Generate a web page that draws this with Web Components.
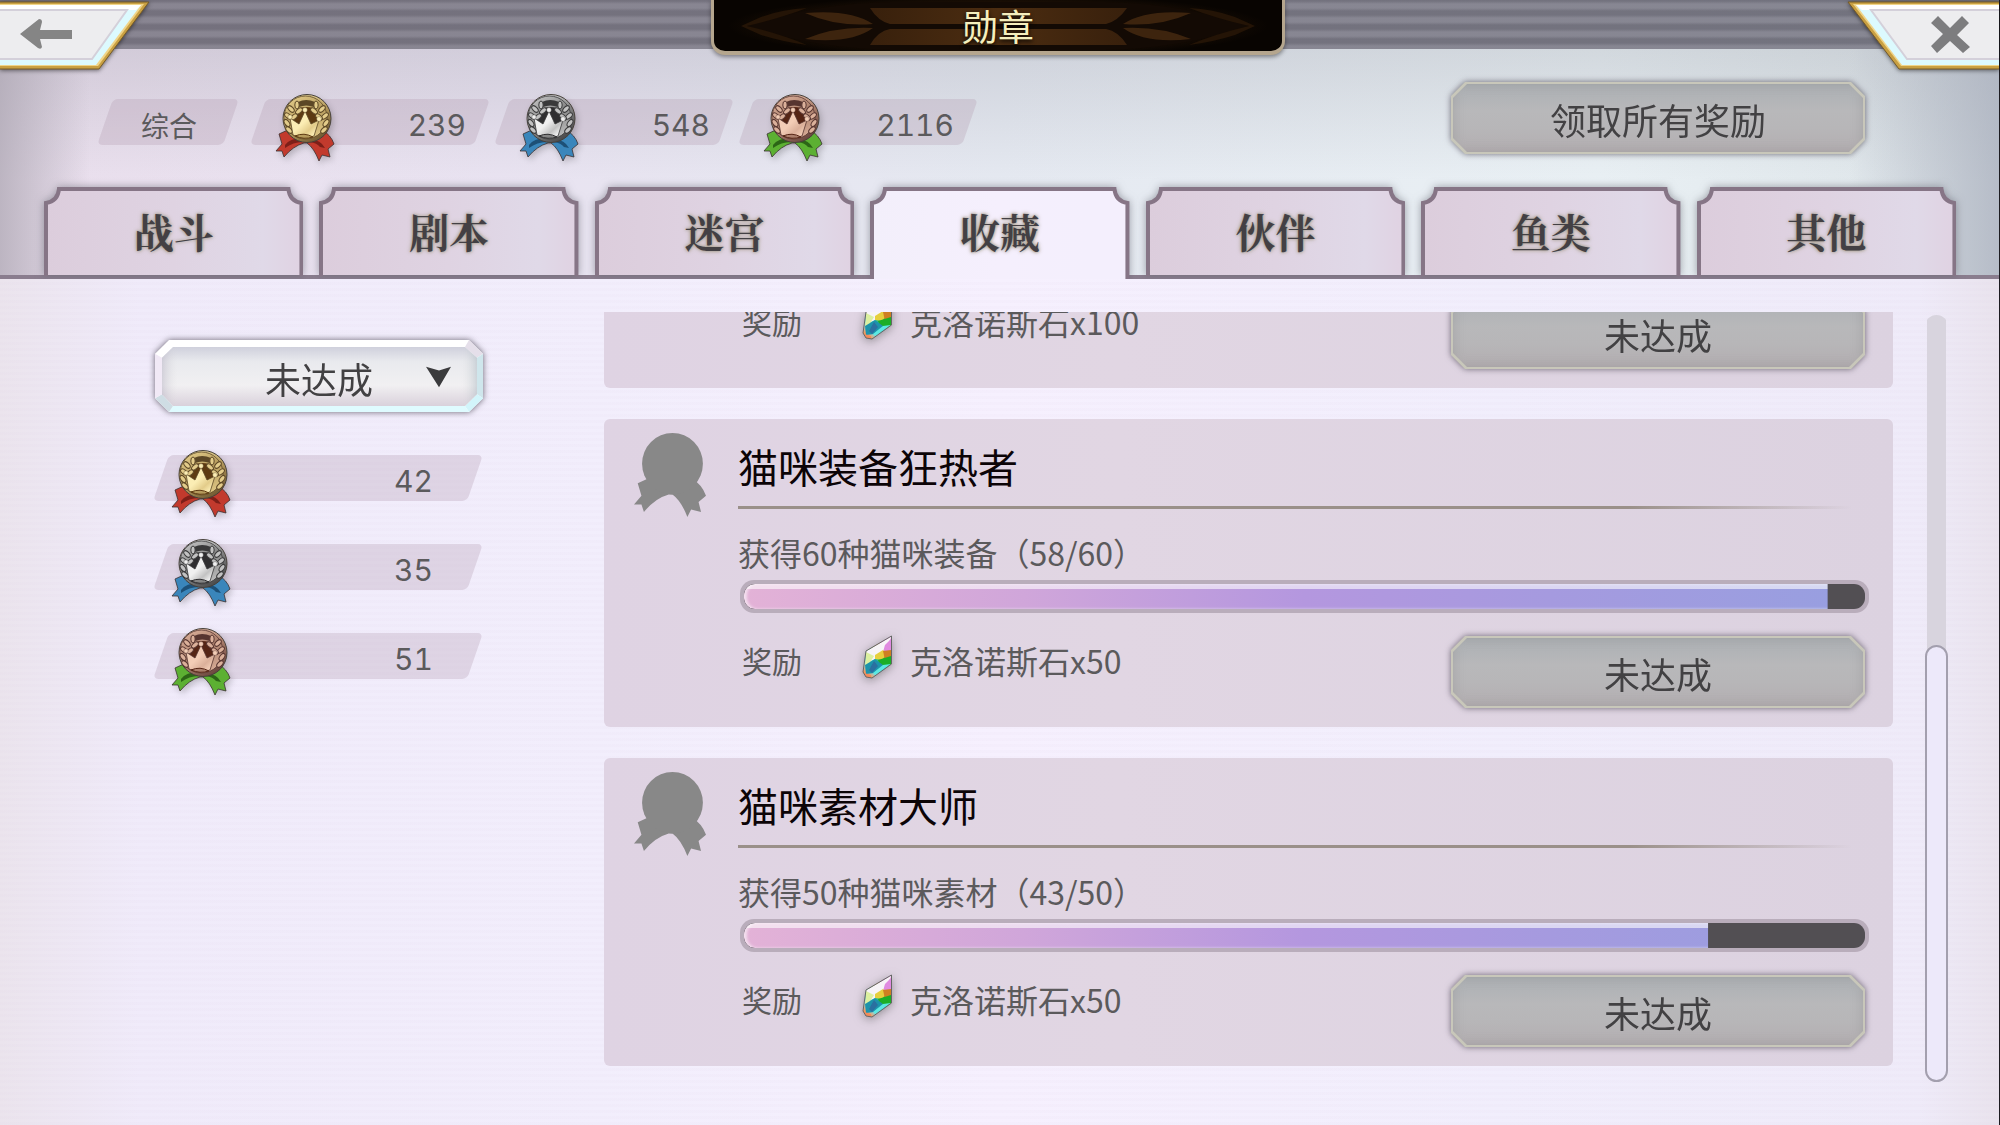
<!DOCTYPE html>
<html lang="zh-CN">
<head>
<meta charset="utf-8">
<title>勋章</title>
<style>
	body {
		margin: 0;
		font-family: "Noto Sans CJK SC", "Noto Sans", sans-serif;
		color: #5b5a5c;
	}
</style>
</head>
<body>
<medal-screen></medal-screen>

<script>
const MEDALS = {
	gold: {light: '#fbedb4', leaf: '#e3cc8a', mid: '#b59a5c', dark: '#5c4726', deep: '#5d3a12', ribbon: '#c23a2d', fold: '#7d1f18'},
	silver: {light: '#f0f0f0', leaf: '#c2c2c2', mid: '#858585', dark: '#39393a', deep: '#2f2e30', ribbon: '#3a86bb', fold: '#1d5077'},
	bronze: {light: '#f3cdb6', leaf: '#dbb09a', mid: '#ab7f6c', dark: '#573530', deep: '#562515', ribbon: '#5cb032', fold: '#2c6516'},
}

const TABS = ['战斗', '剧本', '迷宫', '收藏', '伙伴', '鱼类', '其他']
const TOTALS = [['gold', 239], ['silver', 548], ['bronze', 2116]]
const REMAINING = [['gold', 42], ['silver', 35], ['bronze', 51]]

const RIBBON = 'M3 40 L14 35 L46 36 Q55 41 58 50 L52 55 L54 63 L46 61 L43 67 Q38 54 31 49 H28 Q17 52 8 63 L6 57 L0 57 L6 50 Z'

class MedalIcon extends HTMLElement {
	constructor() {
		super()
		this.attachShadow({mode:'open'})
	}

	connectedCallback() {
		let c = MEDALS[this.getAttribute('kind')]
		this.shadowRoot.innerHTML = /*html*/`
<style>
	:host {
		display: block;
		width: 58px;
		height: 67px;
	}
	svg {
		display: block;
		width: 100%;
		height: 100%;
		overflow: visible;
	}
	.cast {
		filter: drop-shadow(2px 3px 3px #0003);
	}
</style>
${c ? this.coloured(c) : this.locked()}`
	}

	locked() {
		return /*html*/`
<svg viewBox="0 0 58 67" preserveAspectRatio="none" aria-hidden="true">
	<path d="${RIBBON}" fill="#888"/>
	<circle cx="31" cy="24.500" r="24.500" fill="#888"/>
</svg>`
	}

	coloured(c) {
		// leaves of one laurel branch: x, y, rotation
		let leaves = [[21,11,0], [15,15,-45], [23,17,50], [12,22,-50], [18,23,50], [11,29,-35], [13,36,-45]]
		let branch = leaves
			.map(([x, y, r]) => `<ellipse cx="${x}" cy="${y}" rx="2.200" ry="4" transform="rotate(${r} ${x} ${y})"/>`)
			.join('')
		return /*html*/`
<svg viewBox="0 0 58 67" aria-hidden="true">
	<defs>
		<linearGradient id="rim" x1="0.2" y1="0" x2="0.9" y2="1">
			<stop offset="0" stop-color="${c.light}"/>
			<stop offset="0.5" stop-color="${c.mid}"/>
			<stop offset="1" stop-color="${c.dark}"/>
		</linearGradient>
		<linearGradient id="face" x1="0.2" y1="0" x2="0.8" y2="1">
			<stop offset="0" stop-color="${c.leaf}"/>
			<stop offset="0.5" stop-color="${c.mid}"/>
			<stop offset="1" stop-color="${c.leaf}"/>
		</linearGradient>
		<linearGradient id="crown" x1="0" y1="0" x2="1" y2="1">
			<stop offset="0.45" stop-color="${c.light}"/>
			<stop offset="0.68" stop-color="${c.leaf}"/>
			<stop offset="0.85" stop-color="${c.light}"/>
		</linearGradient>
	</defs>
	<g class="cast">
		<path d="${RIBBON}" fill="${c.ribbon}" stroke="#3a3030" stroke-width="0.8"/>
		<path d="M9 51 Q14 44 27 44 L27 48 Q17 48 9 54 Z M34 45 Q45 46 49 54 L44 53 Q41 49 34 48 Z" fill="${c.fold}"/>
		<circle cx="31" cy="24.500" r="24" fill="url(#rim)" stroke="#46403a"/>
		<circle cx="29.500" cy="23.500" r="21.500" fill="url(#face)" stroke="${c.dark}" stroke-width="0.800"/>
	</g>
	<path d="M22 8 Q30 4 39 8 L38 13 Q30 10 23 13 Z" fill="${c.dark}"/>
	<path d="M24 14 Q30 12 37 14 L43 27 L36 33 L20 33 L17 27 Z" fill="${c.deep}"/>
	<g fill="${c.leaf}" stroke="${c.dark}" stroke-width="1">
		<g>${branch}</g>
		<g transform="translate(61 0) scale(-1 1)">${branch}</g>
	</g>
	<path d="M14 24 L23 30 L29 17 L35 30 L43 26 L38 42 Q28 46 17 41 Z" fill="url(#crown)" stroke="${c.dark}" stroke-width="0.800"/>
	<path d="M19 42 Q28 38 37 43 Q28 46 19 42 Z" fill="${c.mid}" stroke="${c.deep}"/>
	<g fill="${c.light}" stroke="${c.dark}" stroke-width="0.400">
		<circle cx="14" cy="23" r="2.200"/><circle cx="29" cy="16" r="2.400"/><circle cx="43" cy="25" r="2.400"/>
	</g>
</svg>`
	}
}
customElements.define('medal-icon', MedalIcon)


class MedalCount extends HTMLElement {
	constructor() {
		super()
		this.attachShadow({mode:'open'})
	}

	connectedCallback() {
		let kind = this.getAttribute('kind')
		this.shadowRoot.innerHTML = /*html*/`
<style>
	:host {
		display: flex;
		position: relative;
		isolation: isolate;
		box-sizing: border-box;
		height: 46px;
		width: 240px;
		align-items: center;
		justify-content: flex-end;
		padding: 0 24px;
		font: 30px/46px Inter, "Noto Sans CJK SC", sans-serif;
		font-variant-numeric: tabular-nums;
	}
	:host([wide]) {
		width: auto;
		padding: 0 50px;
	}
	:host([plain]) {
		width: 142px;
		justify-content: center;
		font-size: 28px;
	}
	:host::before {
		content: "";
		position: absolute;
		z-index: -1;
		inset: 0 8px;
		border-radius: 5px;
		transform: skewX(-19deg);
		background: #b39bb04d;
	}
	medal-icon {
		position: absolute;
		left: 26px;
		top: -5px;
	}
	:host([wide]) medal-icon {
		left: 19px;
	}
	span {
		padding-top: 6px;
	}
	:host([plain]) span {
		padding: 10px 0 0 2px;
	}
</style>
${kind ? `<medal-icon kind="${kind}"></medal-icon>` : ''}
<span><slot></slot></span>`
	}
}
customElements.define('medal-count', MedalCount)


class CutButton extends HTMLElement {
	constructor() {
		super()
		this.attachShadow({mode:'open'})
		this.shadowRoot.innerHTML = /*html*/`
<style>
	:host {
		display: block;
		width: 414px;
		height: 72px;
		filter: drop-shadow(0 0 3px #3c3644b0);
	}
	button {
		position: relative;
		isolation: isolate;
		width: 100%;
		height: 100%;
		border: 0;
		padding: 2px 0 0;
		background: none;
		font: inherit;
		font-size: 36px;
		line-height: 52px;
		color: #424143;
	}
	button::before, button::after {
		content: "";
		position: absolute;
		z-index: -1;
		inset: 0;
		clip-path: polygon(14px 0, calc(100% - 14px) 0, 100% 14px, 100% calc(100% - 14px), calc(100% - 14px) 100%, 14px 100%, 0 calc(100% - 14px), 0 14px);
		background: #c8c7ba;
	}
	button::after {
		inset: 2px;
		background: linear-gradient(#acb0b4, #b8b8ba 40%, #b7b6b8 65%, #b3aeb1);
		box-shadow: inset 0 0 12px #8886;
	}
</style>
<button type="button" disabled><slot></slot></button>`
	}
}
customElements.define('cut-button', CutButton)


class MedalFilter extends HTMLElement {
	constructor() {
		super()
		this.attachShadow({mode:'open', delegatesFocus:true})
		this.shadowRoot.innerHTML = /*html*/`
<style>
	:host {
		display: grid;
		height: 72px;
		margin: 0 0 0 2px;
		filter: drop-shadow(0 0 3px #3c3644c0);
	}
	svg, select {
		grid-area: 1 / 1;
		width: 100%;
		height: 100%;
		min-width: 0;
	}
	select {
		position: relative;
		appearance: none;
		border: 0;
		margin: 0;
		padding: 3px 0 0;
		background: none;
		font: inherit;
		font-size: 36px;
		color: #424143;
		text-align: center;
		text-align-last: center;
	}
</style>
<svg viewBox="0 0 328 73" preserveAspectRatio="none" aria-hidden="true">
	<defs>
		<linearGradient id="face" x2="0" y2="1">
			<stop offset="0" stop-color="#cfd0dc"/>
			<stop offset="0.25" stop-color="#e9eaee"/>
			<stop offset="0.65" stop-color="#f1f0f2"/>
			<stop offset="1" stop-color="#d9d1db"/>
		</linearGradient>
		<linearGradient id="side">
			<stop offset="0" stop-color="#aaa5b8" stop-opacity="0.4"/>
			<stop offset="0.05" stop-color="#ddd" stop-opacity="0"/>
			<stop offset="0.95" stop-color="#ddd" stop-opacity="0"/>
			<stop offset="1" stop-color="#9aabb5" stop-opacity="0.4"/>
		</linearGradient>
	</defs>
	<path d="M14 0 H314 L328 14 V59 L314 73 H14 L0 59 V14 Z" fill="#fff"/>
	<path d="M314 0 L328 14 L322 18 L310 7 Z" fill="#e5dfea"/>
	<path d="M328 14 V59 L322 55 V18 Z" fill="#cfe6ec"/>
	<path d="M328 59 L314 73 L310 67 L322 55 Z" fill="#d2f5fb"/>
	<path d="M314 73 H14 L18 67 H310 Z" fill="#dffbff"/>
	<path d="M14 73 L0 59 L7 55 L18 67 Z" fill="#cfdde4"/>
	<path d="M0 59 V14 L7 18 V55 Z" fill="#f1e9f6"/>
	<path d="M18 7 H310 L322 18 V55 L310 67 H18 L7 55 V18 Z" fill="url(#face)"/>
	<path d="M18 7 H310 L322 18 V55 L310 67 H18 L7 55 V18 Z" fill="url(#side)"/>
	<path d="M271 27 L284 31 L296 27 L284 48 Z" fill="#3b3b3d"/>
</svg>
<select aria-label="达成状态">
	<option>未达成</option>
</select>`
	}
}
customElements.define('medal-filter', MedalFilter)


class MedalTab extends HTMLElement {
	constructor() {
		super()
		this.attachShadow({mode:'open', delegatesFocus:true})
	}

	connectedCallback() {
		let active = this.hasAttribute('active')
		this.shadowRoot.innerHTML = /*html*/`
<style>
	:host {
		display: block;
		flex: 1;
		height: 92px;
	}
	button {
		display: grid;
		width: 100%;
		height: 100%;
		border: 0;
		padding: 0;
		background: none;
		cursor: pointer;
		font: bold 40px/88px "Noto Serif CJK SC", "Source Han Serif SC", "Noto Sans CJK SC", serif;
		color: #434044;
		text-shadow: 0 0 3px #9d9483, 0 0 5px #b5ad9c;
	}
	svg, span {
		grid-area: 1 / 1;
		width: 100%;
	}
	svg {
		height: 92px;
		filter: drop-shadow(0 0 4px #5e606a90);
	}
	span {
		position: relative;
	}
</style>
<button type="button" role="tab" aria-selected="${active}">
	<svg viewBox="0 0 260 92" preserveAspectRatio="none" aria-hidden="true">
		<defs>
			<linearGradient id="fill">
				<stop offset="0" stop-color="${active ? '#f3effb' : '#dccddc'}"/>
				<stop offset="0.5" stop-color="${active ? '#f5effd' : '#dfd3e2'}"/>
				<stop offset="0.85" stop-color="${active ? '#f4effd' : '#e0d9e8'}"/>
				<stop offset="1" stop-color="${active ? '#f4effd' : '#e0d2e2'}"/>
			</linearGradient>
		</defs>
		<path d="M2 ${active ? 92 : 88} V16 Q14 14 15 2 H245 Q246 14 258 16 V${active ? 92 : 88} Z" fill="url(#fill)"/>
		<path d="M2 ${active ? 92 : 89} V16 Q14 14 15 2 H245 Q246 14 258 16 V${active ? 92 : 89}" fill="none" stroke="#867586" stroke-width="4"/>
	</svg>
	<span><slot></slot></span>
</button>`
	}
}
customElements.define('medal-tab', MedalTab)


class ProgressBar extends HTMLElement {
	constructor() {
		super()
		this.attachShadow({mode:'open'})
	}

	connectedCallback() {
		let value = Number(this.getAttribute('value'))
		let max = Number(this.getAttribute('max'))
		this.shadowRoot.innerHTML = /*html*/`
<style>
	:host {
		display: block;
		box-sizing: border-box;
		height: 33px;
		padding: 4px;
		border-radius: 14px;
		background: #b9adbb;
	}
	.track {
		height: 25px;
		border-radius: 11px;
		overflow: hidden;
		background: #524f53;
	}
	.fill {
		height: 100%;
		border-radius: 11px;
		background:
			linear-gradient(#fff9 5px, #fff0 5px),
			linear-gradient(90deg, #e3b2d7, #d0a6da 25%, #b497df 50%, #a59adf 72%, #979fe0);
		box-shadow: inset 3px 0 3px #fff9;
		clip-path: inset(0 ${100 - value / max * 100}% 0 0);
	}
</style>
<div class="track" role="progressbar" aria-valuenow="${value}" aria-valuemax="${max}"><div class="fill"></div></div>`
	}
}
customElements.define('progress-bar', ProgressBar)


class ChronosStone extends HTMLElement {
	constructor() {
		super()
		this.attachShadow({mode:'open'})
		this.shadowRoot.innerHTML = /*html*/`
<style>
	:host {
		display: block;
		width: 29px;
		height: 43px;
		filter: drop-shadow(0 2px 5px #5558);
	}
	svg {
		display: block;
		overflow: visible;
	}
</style>
<svg width="29" height="43" viewBox="0 0 29 43" aria-hidden="true">
	<defs>
		<linearGradient id="hue" x1="0.9" y1="0" x2="0.3" y2="1">
			<stop offset="0" stop-color="#f0b8e8"/>
			<stop offset="0.2" stop-color="#d878d8"/>
			<stop offset="0.34" stop-color="#e89a30"/>
			<stop offset="0.5" stop-color="#31b62b"/>
			<stop offset="0.65" stop-color="#25c4b8"/>
			<stop offset="0.85" stop-color="#7fdff0"/>
			<stop offset="1" stop-color="#f59a5c"/>
		</linearGradient>
		<filter id="soft"><feGaussianBlur stdDeviation="0.700"/></filter>
		<clipPath id="edge"><path d="M28.500 0 V28 L9 42 L3 41 L0 36 L3 15 Z"/></clipPath>
	</defs>
	<path d="M28.500 0 V28 L9 42 L3 41 L0 36 L3 15 Z" fill="url(#hue)"/>
	<g clip-path="url(#edge)"><g filter="url(#soft)">
		<path d="M28 1 L22 16 L15 22 L3 27 V15 Z" fill="#f7f4f7"/>
		<path d="M28 3 L22 9 L20 16 L28 15 Z" fill="#e08ae0"/>
		<path d="M12 19 L20 14 L24 18 L19 24 L12 23 Z" fill="#e6cf3c"/>
		<path d="M20 15 L28 14 V21 L22 24 Z" fill="#cf7f22"/>
		<path d="M15 24 L28 20 V28 L17 30 Z" fill="#1eae26"/>
		<path d="M3 16 L11 20 L6 28 L2 30 Z" fill="#dcf0a0"/>
		<path d="M2 29 L12 23 L20 29 L11 37 L3 38 Z" fill="#1f93ab"/>
		<path d="M11 25 L15 30 L9 37 L6 34 Z" fill="#2a6fa0"/>
		<path d="M20 29 L28 28 L12 39 L10 37 Z" fill="#5be8e2"/>
		<path d="M1 37 L8 39 L8 42 L3 41 Z" fill="#f28a5a"/>
	</g></g>
	<path d="M28.500 0 V28 L9 42 L3 41 L0 36 L3 15 Z" fill="none" stroke="#666" stroke-width="1"/>
</svg>`
	}
}
customElements.define('chronos-stone', ChronosStone)


class AchievementCard extends HTMLElement {
	constructor() {
		super()
		this.attachShadow({mode:'open'})
	}

	connectedCallback() {
		this.shadowRoot.innerHTML = /*html*/`
<style>
	:host {
		display: grid;
		grid-template-columns: 72px 1fr;
		column-gap: 32px;
		box-sizing: border-box;
		height: 308px;
		padding: 14px 24px 0 30px;
		border-radius: 6px;
		background: linear-gradient(90deg, #dfd3e3, #e1d6e3 40%, #dcd2e0);
	}
	/* scrolled under the upper edge of the list */
	:host([cut]) {
		height: 76px;
		padding-top: 0;
		align-content: end;
		overflow: hidden;
		border-radius: 0 0 6px 6px;
	}
	medal-icon {
		width: 72px;
		height: 84px;
	}
	h2 {
		margin: 0;
		height: 73px;
		font-size: 40px;
		font-weight: 400;
		line-height: 66px;
		color: #0c0407;
	}
	hr {
		height: 3px;
		margin: 0 17px 0 0;
		border: 0;
		background: linear-gradient(90deg, #9a9089 80%, #9a908900);
	}
	p {
		margin: 0;
		padding: 22px 0 6px;
		font-size: 32px;
		line-height: 43px;
	}
	progress-bar {
		margin-left: 2px;
	}
	.reward {
		grid-column: 2;
		display: flex;
		height: 114px;
		padding: 23px 4px 0;
		box-sizing: border-box;
		font-size: 32px;
		line-height: 48px;
	}
	.caption {
		width: 121px;
		font-size: 30px;
	}
	.name {
		flex: 1;
		padding-left: 18px;
	}
</style>
${this.hasAttribute('cut') ? '' : /*html*/`
<medal-icon></medal-icon>
<div>
	<h2>${this.getAttribute('heading')}</h2>
	<hr>
	<p><slot></slot></p>
	<progress-bar value="${this.getAttribute('value')}" max="${this.getAttribute('max')}"></progress-bar>
</div>`}
<div class="reward">
	<span class="caption">奖励</span>
	<chronos-stone></chronos-stone>
	<span class="name">${this.getAttribute('reward')}</span>
	<cut-button>未达成</cut-button>
</div>`
	}
}
customElements.define('achievement-card', AchievementCard)


class TopBar extends HTMLElement {
	constructor() {
		super()
		this.attachShadow({mode:'open'})
		this.shadowRoot.innerHTML = /*html*/`
<style>
	:host {
		display: grid;
		grid-template-columns: 711fr 574px 714fr;
		height: 49px;
		background:
			linear-gradient(90deg, #80708020, #70808820),
			repeating-linear-gradient(#73717d 0 1px, #8a8894 4px 8px, #73717d 11px 14px);
	}
	button {
		width: 152px;
		height: 72px;
		border: 0;
		padding: 0;
		background: none;
		cursor: pointer;
	}
	.close {
		justify-self: end;
	}
	svg {
		display: block;
	}
	button svg {
		filter: drop-shadow(0 1px 2px #0008);
	}
	h1 {
		display: grid;
		box-sizing: border-box;
		height: 55px;
		margin: 0;
		overflow: hidden;
		border: solid #b5a68e;
		border-width: 0 3px 4px;
		border-radius: 0 0 14px 14px;
		background: #080401;
		box-shadow: 0 2px 4px #0006;
		font-size: 36px;
		font-weight: 400;
		line-height: 50px;
		text-align: center;
		color: #f5efbd;
	}
	h1 svg, h1 span {
		grid-area: 1 / 1;
		width: 100%;
	}
	h1 span {
		position: relative;
		text-shadow: 0 2px 4px #000;
	}
</style>
<button class="back" type="button" aria-label="返回">
	<svg width="152" height="72" viewBox="0 0 152 72">
		<path d="M-5 2 H149 L99 69 H-5 Z" fill="#c9a042" stroke="#755a28" stroke-width="1"/>
		<path d="M-5 4 H144 L98 66 H-5 Z" fill="#f0d488"/>
		<path d="M-5 5 H141 L96 65 H-5 Z" fill="#dcfafe"/>
		<path d="M-5 5 H141 L136 10 H-5 Z" fill="#fff"/>
		<path d="M-5 10 H127 L92 59 H-5 Z" fill="#ededef" stroke="#d4d0da" stroke-width="2"/>
		<path d="M20 34 L39 19 Q42 19 42 22 L40 30 H72 V39 H40 L42 47 Q41 50 38 48 Z" fill="#858585"/>
	</svg>
</button>
<h1>
	<svg width="568" height="51" viewBox="3 0 568 51" preserveAspectRatio="none" aria-hidden="true">
		<defs>
			<radialGradient id="glow">
				<stop offset="0.5" stop-color="#2a1808"/>
				<stop offset="1" stop-color="#080401"/>
			</radialGradient>
			<linearGradient id="band">
				<stop offset="0" stop-color="#38200c"/>
				<stop offset="0.5" stop-color="#4c2d11"/>
				<stop offset="1" stop-color="#38200c"/>
			</linearGradient>
		</defs>
		<ellipse cx="287" cy="26" rx="270" ry="32" fill="url(#glow)"/>
		<path d="M36 26 Q100 4 180 2 H394 Q474 4 538 26 Q474 48 394 50 H180 Q100 48 36 26 Z" fill="#130a04"/>
		<path d="M159 8 H416 Q407 21 395 24 H179 Q167 21 159 8 Z M179 29 H395 Q407 31 416 45 H159 Q167 31 179 29 Z" fill="url(#band)"/>
		<g id="leaf" fill="#3d240e">
			<path d="M94 13 Q140 9 162 24 Q125 27 94 13 Z M94 39 Q140 44 162 28 Q125 26 94 39 Z"/>
			<path d="M50 17 Q72 9 96 8 Q70 18 36 26 Q70 34 96 45 Q72 42 50 35 L30 26 Z" fill="#241406"/>
		</g>
		<use href="#leaf" transform="translate(574 0) scale(-1 1)"/>
	</svg>
	<span><slot></slot></span>
</h1>
<button class="close" type="button" aria-label="关闭">
	<svg width="152" height="72" viewBox="0 0 152 72">
		<path d="M157 2 H1 L52 69 H157 Z" fill="#c9a042" stroke="#755a28" stroke-width="1"/>
		<path d="M157 4 H6 L54 66 H157 Z" fill="#f0d488"/>
		<path d="M157 5 H9 L55 65 H157 Z" fill="#dcfafe"/>
		<path d="M157 5 H9 L15 10 H157 Z" fill="#fff"/>
		<path d="M157 10 H24 L60 59 H157 Z" fill="#ededef" stroke="#d4d0da" stroke-width="2"/>
		<path d="M91 16 L103 28 L115 16 L122 23 L110 35 L123 47 L116 53 L103 41 L90 53 L84 46 L96 34 L84 23 Z" fill="#7d7d7f"/>
	</svg>
</button>`
	}
}
customElements.define('top-bar', TopBar)


class MedalScreen extends HTMLElement {
	constructor() {
		super()
		this.attachShadow({mode:'open'})
		this.shadowRoot.innerHTML = /*html*/`
<style>
	:host {
		display: flex;
		flex-direction: column;
		box-sizing: border-box;
		min-height: 100vh;
		border-right: 1px solid #1c1b20;
		background:
			linear-gradient(90deg, #a8a2aeb0 0, #a8a2ae00 90px),
			linear-gradient(270deg, #a9afbdc0 0, #a9b4bb00 150px),
			linear-gradient(#7a7c8848, #fff0 180px),
			linear-gradient(90deg, #eadfed, #e9e3f1 25%, #e5e9f1 50%, #e9f0f4 80%, #dde4e8) #eee;
	}
	.summary {
		display: flex;
		justify-content: space-between;
		align-items: center;
		padding: 33px 134px 33px 97px;
	}
	.totals {
		display: flex;
		gap: 4px;
		padding-top: 8px;
	}
	.totals [plain] {
		margin-right: 7px;
	}
	.tabs {
		display: flex;
		gap: 16px;
		padding: 0 43px 0 44px;
		background: linear-gradient(#8a7d8e, #8a7d8e) bottom / 100% 4px no-repeat;
	}
	main {
		position: relative;
		flex: 1;
		display: grid;
		grid-template-columns: 330px 1fr 23px;
		padding: 33px 51px 43px 153px;
		background:
			repeating-linear-gradient(#fff0 0 3px, #d8c8e010 3px 6px),
			linear-gradient(90deg, #ebe4ed, #f0ebfa 7%, #f2eefc 30%, #f6f0fe 50%, #f1eefc 75%, #efebf9 96%, #e9e3ed);
	}
	aside {
		display: flex;
		flex-direction: column;
		gap: 43px;
		padding-top: 28px;
	}
	.list {
		display: flex;
		flex-direction: column;
		gap: 31px;
		margin: 0 32px 0 121px;
	}
	.scrollbar {
		display: flex;
		align-items: flex-end;
		margin-top: 3px;
		background: linear-gradient(#d8d4de, #d8d4de) center / 19px 100% no-repeat;
		border-radius: 12px;
	}
	.thumb {
		box-sizing: border-box;
		width: 100%;
		height: 57%;
		border: 2px solid #a39fae;
		border-radius: 12px;
		background: #ede9fa;
	}
</style>
<top-bar>勋章</top-bar>
<div class="summary">
	<div class="totals">
		<medal-count plain>综合</medal-count>
		${this.buildCounts(TOTALS)}
	</div>
	<cut-button>领取所有奖励</cut-button>
</div>
<nav class="tabs" role="tablist">${
	TABS
		.map(name => `<medal-tab ${name === '收藏' ? 'active' : ''}>${name}</medal-tab>`)
		.join('')
}</nav>
<main>
	<aside>
		<medal-filter></medal-filter>
		${this.buildCounts(REMAINING, 'wide')}
	</aside>
	<div class="list">
		<achievement-card cut reward="克洛诺斯石x100"></achievement-card>
		<achievement-card heading="猫咪装备狂热者" value="58" max="60" reward="克洛诺斯石x50">获得60种猫咪装备（58/60）</achievement-card>
		<achievement-card heading="猫咪素材大师" value="43" max="50" reward="克洛诺斯石x50">获得50种猫咪素材（43/50）</achievement-card>
	</div>
	<div class="scrollbar"><div class="thumb"></div></div>
</main>`

		this.shadowRoot.querySelector('.tabs').addEventListener('click', this.onTab.bind(this))
	}

	buildCounts(counts, flags = '') {
		return counts
			.map(([kind, n]) => `<medal-count kind="${kind}" ${flags}>${n}</medal-count>`)
			.join('')
	}

	onTab(e) {
		let tab = e.target.closest('medal-tab')
		if (!tab)
			return
		for (let node of this.shadowRoot.querySelectorAll('medal-tab')) {
			node.toggleAttribute('active', node === tab)
			node.connectedCallback()
		}
	}
}
customElements.define('medal-screen', MedalScreen)
</script>
</body>
</html>
